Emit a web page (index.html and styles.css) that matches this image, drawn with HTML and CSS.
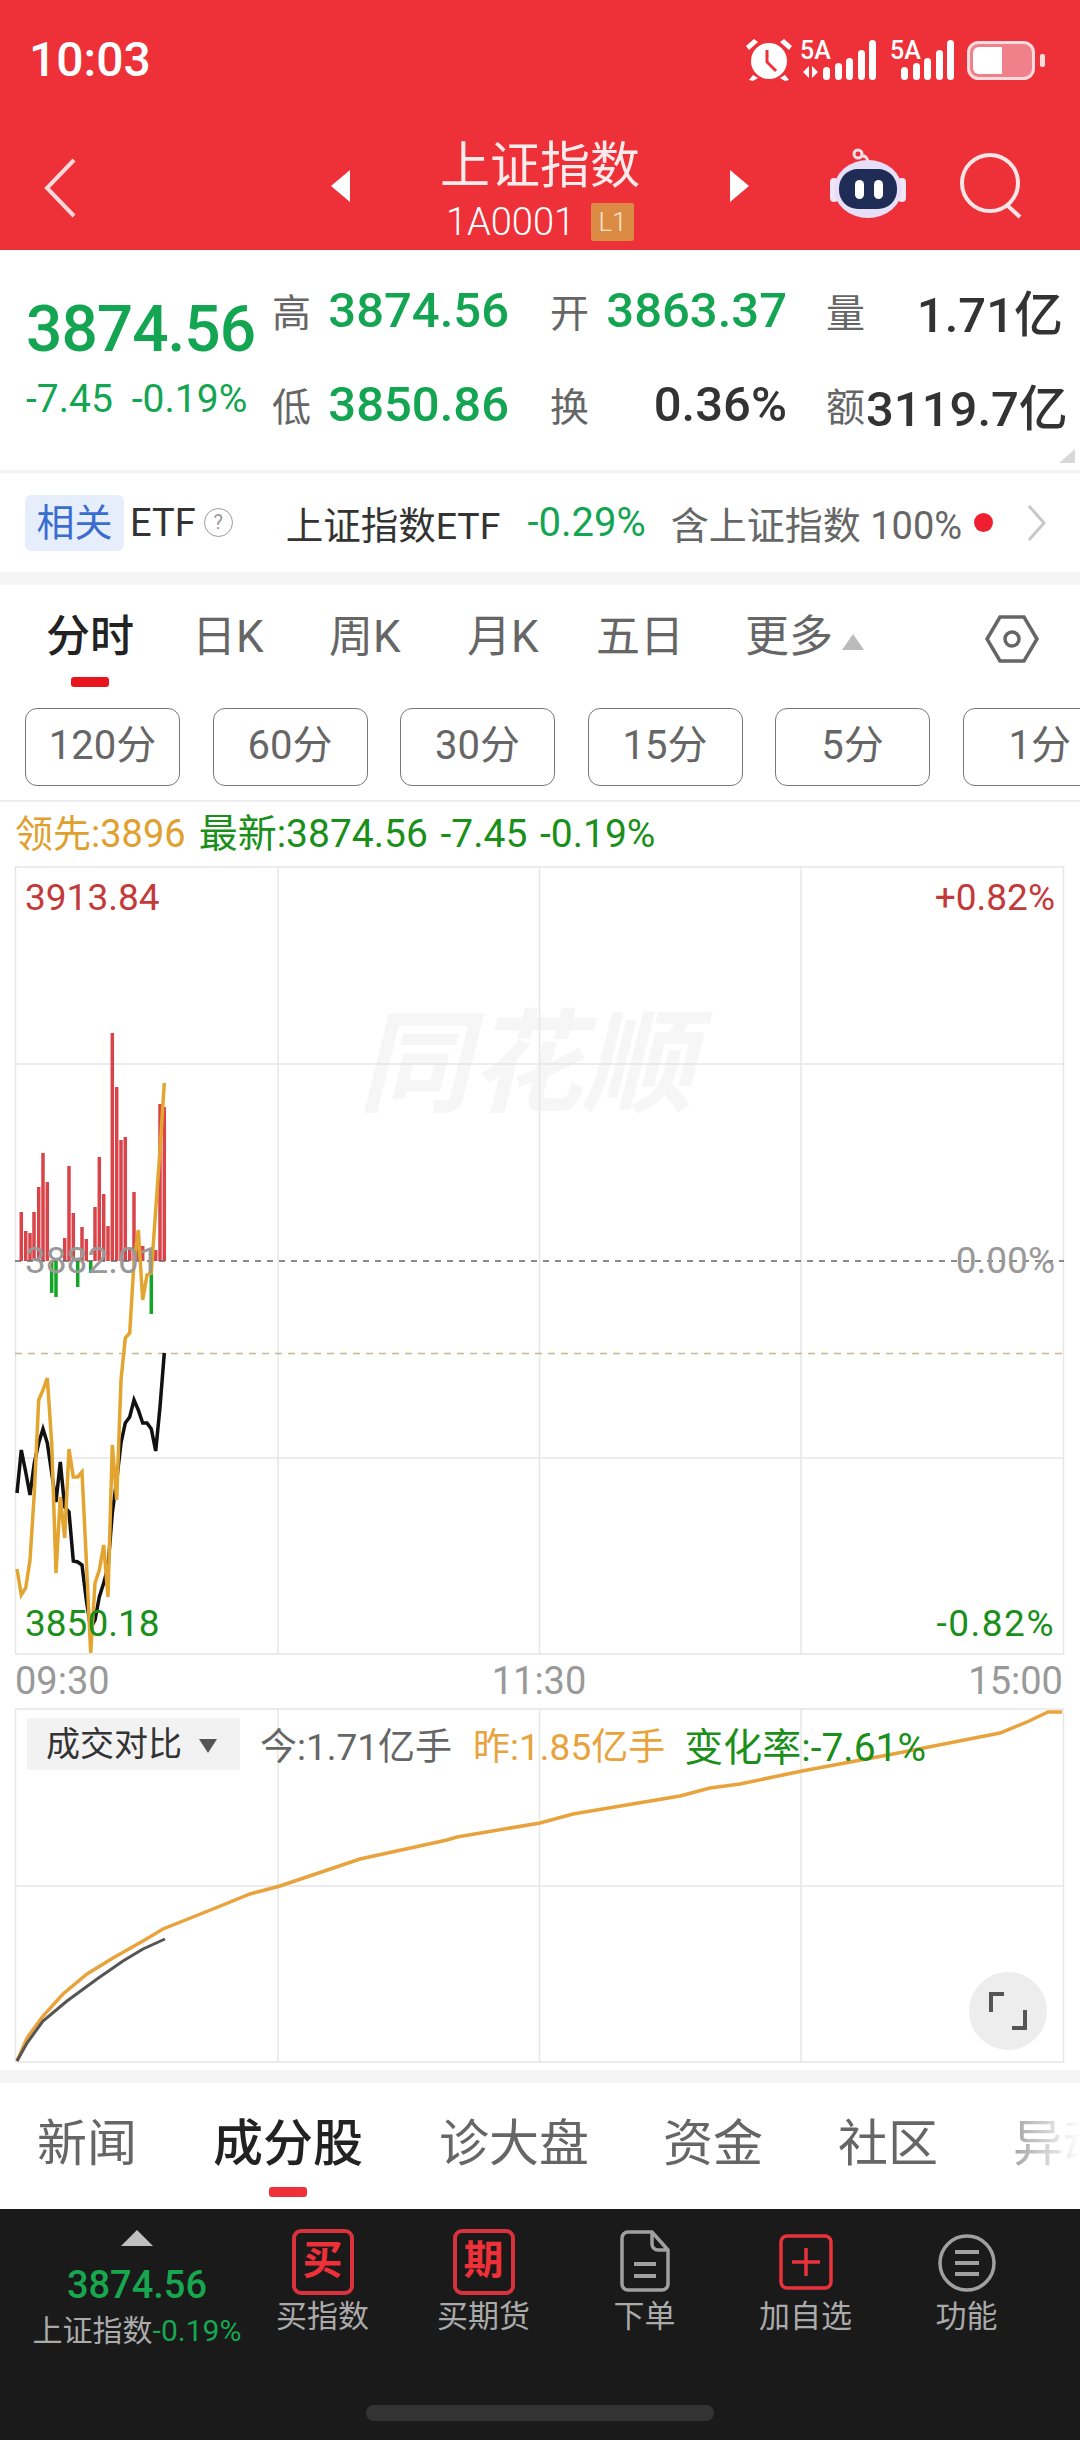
FILE: index.html
```html
<!DOCTYPE html>
<html lang="zh-CN">
<head>
    <meta charset="UTF-8">
    <meta name="viewport" content="width=device-width, initial-scale=1.0">
    <title>上证指数</title>
    <link rel="stylesheet" href="styles.css">
</head>
<body>
    <div class="page">
        <header class="header">
            <div class="status-bar">
                <span class="clock">10:03</span>
                <svg class="status-icons" width="270" height="52" viewBox="0 -8 270 52">
                    <!-- alarm -->
                    <g fill="#fff">
                        <circle cx="26" cy="23" r="18"/>
                        <path d="M6 12 L15 4 L11 1 L3 8Z M46 12 L37 4 L41 1 L49 8Z M10 37 L6 42 L10 43 L15 40Z M42 37 L46 42 L42 43 L37 40Z"/>
                    </g>
                    <path d="M24 12 V24 L33 33" fill="none" stroke="#ee3038" stroke-width="3"/>
                    <!-- sim 1 -->
                    <text class="sim-label" x="57" y="21">5A</text>
                    <path d="M66 28 L60 34 L66 40Z M69 28 L75 34 L69 40Z" fill="#fff"/>
                    <g fill="#fff">
                        <rect x="80" y="29" width="7" height="13" rx="3.5"/>
                        <rect x="92" y="25" width="7" height="17" rx="3.5"/>
                        <rect x="103" y="20" width="7" height="22" rx="3.5"/>
                        <rect x="115" y="12" width="7" height="30" rx="3.5"/>
                        <rect x="126" y="2" width="7" height="40" rx="3.5"/>
                    </g>
                    <!-- sim 2 -->
                    <text class="sim-label" x="147" y="21">5A</text>
                    <g fill="#fff">
                        <rect x="158" y="29" width="7" height="13" rx="3.5"/>
                        <rect x="170" y="25" width="7" height="17" rx="3.5"/>
                        <rect x="181" y="20" width="7" height="22" rx="3.5"/>
                        <rect x="193" y="12" width="7" height="30" rx="3.5"/>
                        <rect x="204" y="2" width="7" height="40" rx="3.5"/>
                    </g>
                </svg>
                <svg class="battery" width="80" height="40" viewBox="0 0 80 40">
                    <rect x="1.5" y="1.5" width="65" height="36" rx="10" fill="#f0808a" stroke="#fbdcde" stroke-width="3"/>
                    <path d="M12 6 H35 V33 H12 A6 6 0 0 1 6 27 V12 A6 6 0 0 1 12 6Z" fill="#fff"/>
                    <rect x="73" y="13" width="5" height="13" rx="2" fill="#fbdcde"/>
                </svg>
            </div>
            <nav class="nav-bar">
                <svg class="nav-back" width="34" height="60" viewBox="0 0 34 60">
                    <path d="M31 2 L4 30 L31 58" fill="none" stroke="#fbd9db" stroke-width="4"/>
                </svg>
                <div class="nav-center">
                    <span class="tri-left"></span>
                    <div class="nav-title">
                        <div class="stock-name">上证指数</div>
                        <div class="stock-code">1A0001<span class="level-tag">L1</span></div>
                    </div>
                    <span class="tri-right"></span>
                </div>
                <svg class="nav-robot" width="78" height="72" viewBox="0 0 78 72">
                    <circle cx="29" cy="6" r="4" fill="none" stroke="#f3dfe6" stroke-width="3"/>
                    <path d="M32 8 Q38 7 39 14" fill="none" stroke="#f3dfe6" stroke-width="3"/>
                    <rect x="1" y="30" width="8" height="24" rx="4" fill="#f1e6f6"/>
                    <rect x="69" y="30" width="8" height="24" rx="4" fill="#f1e6f6"/>
                    <ellipse cx="39" cy="41" rx="34" ry="29" fill="#e6dff7"/>
                    <rect x="10" y="21" width="58" height="40" rx="19" fill="#1f2c55"/>
                    <rect x="26" y="32" width="9" height="19" rx="4.5" fill="#fff"/>
                    <rect x="45" y="32" width="9" height="19" rx="4.5" fill="#fff"/>
                </svg>
                <svg class="nav-search" width="68" height="66" viewBox="0 0 68 66">
                    <circle cx="31" cy="30" r="28" fill="none" stroke="#fde4e6" stroke-width="4"/>
                    <path d="M49 53 L61 64" fill="none" stroke="#fde4e6" stroke-width="4"/>
                </svg>
            </nav>
        </header>

        <section class="quote">
            <div class="quote-main">
                <div class="last-price">3874.56</div>
                <div class="last-change"><span>-7.45</span><span>-0.19%</span></div>
            </div>
            <div class="quote-grid">
                <span class="q-label">高</span><span class="q-value up">3874.56</span>
                <span class="q-label">开</span><span class="q-value up">3863.37</span>
                <span class="q-label">量</span><span class="q-value">1.71亿</span>
                <span class="q-label">低</span><span class="q-value up">3850.86</span>
                <span class="q-label">换</span><span class="q-value">0.36%</span>
                <span class="q-label">额</span><span class="q-value">3119.7亿</span>
            </div>
            <span class="corner-mark"></span>
        </section>

        <section class="etf-row">
            <span class="etf-chip">相关</span>
            <span class="etf-title">ETF</span>
            <span class="help-dot">?</span>
            <span class="etf-name">上证指数ETF</span>
            <span class="etf-change">-0.29%</span>
            <span class="etf-hold">含上证指数 100%</span>
            <span class="red-dot"></span>
            <svg class="etf-arrow" width="20" height="36" viewBox="0 0 20 36">
                <path d="M2 1 L17 18 L2 35" fill="none" stroke="#c8c8c8" stroke-width="3"/>
            </svg>
        </section>

        <section class="chart-panel">
            <div class="period-tabs">
                <span class="period-tab active">分时</span>
                <span class="period-tab">日K</span>
                <span class="period-tab">周K</span>
                <span class="period-tab">月K</span>
                <span class="period-tab">五日</span>
                <span class="period-tab more">更多<i class="more-tri"></i></span>
                <svg class="hex-icon" width="54" height="48" viewBox="0 0 54 48">
                    <path d="M15 2 H39 L52 24 L39 46 H15 L2 24Z" fill="none" stroke="#666" stroke-width="3.5"/>
                    <circle cx="27" cy="24" r="7" fill="none" stroke="#666" stroke-width="3.5"/>
                </svg>
            </div>
            <div class="minute-tabs">
                <span class="minute-btn">120分</span>
                <span class="minute-btn">60分</span>
                <span class="minute-btn">30分</span>
                <span class="minute-btn">15分</span>
                <span class="minute-btn">5分</span>
                <span class="minute-btn last">1分</span>
            </div>
            <div class="chart-legend">
                <span class="lead">领先:3896</span>
                <span class="latest">最新:3874.56 -7.45 -0.19%</span>
            </div>

            <div class="price-chart">
                <div class="watermark">同花顺</div>
                <svg class="chart-svg" width="1080" height="790" viewBox="0 866 1080 790">
                    <g class="grid-line">
                        <path d="M15 867 H1064 M15 1064 H1064 M15 1458 H1064 M15 1654 H1064"/>
                        <path d="M15.5 867 V1654 M278 867 V1654 M539.5 867 V1654 M801 867 V1654 M1063.5 867 V1654"/>
                    </g>
                    <path class="bars-red" d="M21.3 1261V1212 M25.7 1261V1231 M30 1261V1233 M34 1261V1212 M38.7 1261V1187 M43 1261V1153 M47.3 1261V1182 M64.7 1261V1238 M69 1261V1166 M73.3 1261V1213 M82 1261V1227 M86.3 1261V1239 M95 1261V1207 M99.3 1261V1157 M103.7 1261V1194 M108 1261V1226 M112.3 1261V1033 M116.7 1261V1087 M121 1261V1140 M125.3 1261V1137 M129.7 1261V1250 M134 1261V1192 M138.3 1261V1233 M142.7 1261V1246 M155.7 1261V1250 M160 1261V1104 M164.3 1261V1107"/>
                    <path class="bars-green" d="M51.7 1261V1293 M56 1261V1297 M77.7 1261V1287 M90.7 1261V1273 M151.3 1261V1314"/>
                    <path class="dash-dark" d="M15 1261 H1064"/>
                    <path class="dash-tan" d="M15 1353.5 H1064"/>
                    <polyline class="line-black" points="17,1493 21.3,1450 25.7,1472 30,1495 34.3,1463 38.7,1443 43,1429 47.3,1443 51.7,1473 56,1502 60.3,1462 64.7,1507 69,1512 73.3,1561 77.7,1562 82,1565 86.3,1600 90.7,1628 95,1620 99.3,1597 103.7,1583 108,1567 112.3,1513 116.7,1480 121,1443 125.3,1423 129.7,1417 134,1400 138.3,1410 142.7,1423 147,1423 151.3,1429 155.7,1451 160,1407 164.3,1353"/>
                    <polyline class="line-gold" points="17,1569 21.3,1595 25.7,1588 30,1560 34.3,1493 38.7,1400 43,1390 47.3,1378 51.7,1443 56,1573 60.3,1497 64.7,1538 69,1449 73.3,1477 77.7,1477 82,1472 86.3,1560 90.7,1653 95,1583 99.3,1570 103.7,1545 108,1597 112.3,1445 116.7,1500 121,1380 125.3,1338 129.7,1333 134,1262 138.3,1230 142.7,1300 147,1275 151.3,1273 155.7,1210 160,1150 164.3,1083"/>
                </svg>
                <span class="axis-label axis-tl">3913.84</span>
                <span class="axis-label axis-tr">+0.82%</span>
                <span class="axis-label axis-ml">3882.01</span>
                <span class="axis-label axis-mr">0.00%</span>
                <span class="axis-label axis-bl">3850.18</span>
                <span class="axis-label axis-br">-0.82%</span>
            </div>
            <div class="time-axis"><span>09:30</span><span>11:30</span><span>15:00</span></div>

            <div class="volume-chart">
                <svg class="chart-svg" width="1080" height="356" viewBox="0 1707 1080 356">
                    <g class="grid-line">
                        <path d="M15 1708 H1064 M15 1885 H1064 M15 2061 H1064"/>
                        <path d="M15.5 1708 V2061 M278 1708 V2061 M539.5 1708 V2061 M801 1708 V2061 M1063.5 1708 V2061"/>
                    </g>
                    <polyline class="line-yest" points="17,2060 27,2037 43,2015 63,1993 87,1973 113,1957 143,1940 163,1928 213,1908 250,1893 280,1885 360,1858 447,1839 457,1836 540,1822 573,1813 680,1795 710,1787 740,1783 802,1770 893,1753 1000,1732 1027,1721 1048,1711 1062,1711"/>
                    <polyline class="line-today" points="17,2060 27,2042 43,2020 67,2000 97,1978 123,1960 143,1948 165,1938"/>
                </svg>
                <div class="volume-legend">
                    <span class="volume-select">成交对比<i class="select-tri"></i></span>
                    <span class="vol-today">今:1.71亿手</span>
                    <span class="vol-yest">昨:1.85亿手</span>
                    <span class="vol-rate">变化率:-7.61%</span>
                </div>
                <div class="expand-btn">
                    <svg width="40" height="40" viewBox="0 0 40 40">
                        <path d="M16 3 H3 V21 M24 37 H37 V19" fill="none" stroke="#555" stroke-width="4"/>
                    </svg>
                </div>
            </div>
        </section>

        <section class="info-tabs">
            <span class="info-tab">新闻</span>
            <span class="info-tab active">成分股</span>
            <span class="info-tab">诊大盘</span>
            <span class="info-tab">资金</span>
            <span class="info-tab">社区</span>
            <span class="info-tab">异动</span>
        </section>

        <footer class="bottom-bar">
            <div class="bottom-actions">
                <div class="mini-quote">
                    <i class="mini-tri"></i>
                    <div class="mini-price">3874.56</div>
                    <div class="mini-name">上证指数<span>-0.19%</span></div>
                </div>
                <div class="action">
                    <span class="square-icon">买</span>
                    <span class="action-label">买指数</span>
                </div>
                <div class="action">
                    <span class="square-icon">期</span>
                    <span class="action-label">买期货</span>
                </div>
                <div class="action">
                    <svg class="action-svg" width="50" height="62" viewBox="0 0 50 62">
                        <path d="M8 2 H32 L48 20 V54 A6 6 0 0 1 42 60 H8 A6 6 0 0 1 2 54 V8 A6 6 0 0 1 8 2Z M32 2 V14 A6 6 0 0 0 38 20 H48" fill="none" stroke="#a0a0a0" stroke-width="3.5"/>
                        <path d="M14 34 H36 M14 46 H36" stroke="#a0a0a0" stroke-width="4"/>
                    </svg>
                    <span class="action-label">下单</span>
                </div>
                <div class="action">
                    <svg class="action-svg plus-icon" width="54" height="56" viewBox="0 0 54 56">
                        <rect x="2" y="2" width="50" height="52" rx="6" fill="none" stroke="#e8323c" stroke-width="3.5"/>
                        <path d="M27 14 V42 M13 28 H41" stroke="#e8323c" stroke-width="3.5"/>
                    </svg>
                    <span class="action-label">加自选</span>
                </div>
                <div class="action">
                    <svg class="action-svg" width="58" height="58" viewBox="0 0 58 58">
                        <circle cx="29" cy="29" r="27" fill="none" stroke="#a0a0a0" stroke-width="3.5"/>
                        <path d="M17 18 H41 M17 29 H41 M17 40 H41" stroke="#a0a0a0" stroke-width="4"/>
                    </svg>
                    <span class="action-label">功能</span>
                </div>
            </div>
            <div class="home-bar"></div>
        </footer>
    </div>
</body>
</html>
```

FILE: styles.css
```css
* {
    box-sizing: border-box;
}
body {
    margin: 0;
    background: white;
    font-family: Roboto, "Noto Sans CJK SC", sans-serif;
    color: #333;
}
.page {
    width: 1080px;
    height: 2440px;
    overflow: hidden;
    display: flex;
    flex-direction: column;
}

/* red header */
.header {
    height: 250px;
    background: #ee3038;
    color: white;
    flex: none;
}
.status-bar {
    height: 120px;
    display: flex;
    align-items: flex-start;
    padding: 36px 33px 0 29px;
}
.clock {
    font-size: 48px;
    font-weight: 500;
    line-height: 48px;
}
.status-icons {
    margin-left: auto;
    margin-top: -6px;
}
.sim-label {
    font-size: 25px;
    font-weight: 500;
    fill: white;
}
.battery {
    margin-left: -46px;
    margin-top: 5px;
}
.nav-bar {
    height: 130px;
    display: flex;
    align-items: flex-start;
}
.nav-back {
    margin: 38px 0 0 43px;
}
.nav-center {
    width: 418px;
    margin-left: 254px;
    display: flex;
    justify-content: space-between;
    align-items: flex-start;
}
.tri-left, .tri-right {
    margin-top: 50px;
    border-top: 16px solid transparent;
    border-bottom: 16px solid transparent;
}
.tri-left {
    border-right: 19px solid white;
}
.tri-right {
    border-left: 19px solid white;
}
.nav-title {
    text-align: center;
}
.stock-name {
    font-size: 50px;
    line-height: 60px;
    margin-top: 16px;
    color: #fdeaea;
}
.stock-code {
    font-size: 38px;
    font-weight: 300;
    line-height: 44px;
    margin-top: 4px;
    display: flex;
    align-items: center;
    justify-content: center;
}
.level-tag {
    width: 43px;
    height: 38px;
    line-height: 38px;
    margin-left: 16px;
    background: #dc8b45;
    color: #fbe6cf;
    font-size: 26px;
    border-radius: 2px;
}
.nav-robot {
    margin: 28px 0 0 80px;
}
.nav-search {
    margin: 33px 0 0 52px;
}

/* quote block */
.quote {
    height: 220px;
    position: relative;
    display: flex;
    flex: none;
}
.quote-main {
    width: 272px;
    padding: 44px 0 0 26px;
}
.last-price {
    font-size: 64px;
    font-weight: 500;
    line-height: 72px;
    letter-spacing: -1px;
    color: #14a553;
}
.last-change {
    margin-top: 13px;
    display: flex;
    gap: 19px;
    font-size: 39px;
    line-height: 40px;
    color: #14a553;
}
.quote-grid {
    width: 791px;
    margin-top: 30px;
    display: grid;
    grid-template-columns: 56px 181px 97px 181px 79px 197px;
    grid-template-rows: 60px 60px;
    row-gap: 34px;
    height: 154px;
    align-items: center;
}
.q-label {
    font-size: 39px;
    color: #666;
}
.q-label:nth-child(3), .q-label:nth-child(9) {
    padding-left: 41px;
}
.q-label:nth-child(5), .q-label:nth-child(11) {
    padding-left: 39px;
}
.q-value {
    font-size: 49px;
    font-weight: 500;
    color: #333;
    text-align: right;
    white-space: nowrap;
}
.q-value.up {
    color: #14a553;
}
.corner-mark {
    position: absolute;
    right: 5px;
    bottom: 7px;
    border-left: 16px solid transparent;
    border-bottom: 14px solid #d8d8d8;
}

/* related ETF row */
.etf-row {
    height: 115px;
    flex: none;
    border-top: 3px solid #f2f2f2;
    border-bottom: 13px solid #f5f5f5;
    padding: 0 0 0 25px;
    display: flex;
    align-items: center;
    font-size: 37.5px;
    color: #333;
    white-space: nowrap;
}
.etf-chip {
    width: 99px;
    height: 56px;
    line-height: 56px;
    text-align: center;
    background: #e6eefb;
    color: #3b6ccf;
    font-size: 38px;
    border-radius: 6px;
}
.etf-title {
    margin-left: 6px;
    font-size: 38px;
}
.help-dot {
    width: 29px;
    height: 29px;
    line-height: 27px;
    margin-left: 8px;
    border: 1px solid #999;
    border-radius: 50%;
    color: #999;
    font-size: 20px;
    text-align: center;
}
.etf-name {
    margin-left: 53px;
}
.etf-change {
    margin-left: 27px;
    font-size: 40px;
    color: #14a553;
}
.etf-hold {
    margin-left: 25px;
    font-size: 38px;
    color: #666;
}
.red-dot {
    width: 19px;
    height: 19px;
    margin-left: 12px;
    border-radius: 50%;
    background: #ee2030;
}
.etf-arrow {
    margin-left: 34px;
}

/* minute chart panel */
.chart-panel {
    height: 1485px;
    flex: none;
}
.period-tabs {
    height: 123px;
    position: relative;
    font-size: 44px;
    color: #666;
}
.period-tab {
    position: absolute;
    top: 24px;
    line-height: 56px;
    white-space: nowrap;
}
.period-tab:nth-child(1) { left: 46px; }
.period-tab:nth-child(2) { left: 192px; }
.period-tab:nth-child(3) { left: 329px; }
.period-tab:nth-child(4) { left: 467px; }
.period-tab:nth-child(5) { left: 596px; }
.period-tab:nth-child(6) { left: 745px; }
.period-tab.active {
    color: #222;
    font-weight: 500;
}
.period-tab.active::after {
    content: "";
    position: absolute;
    left: 25px;
    top: 68px;
    width: 38px;
    height: 10px;
    border-radius: 3px;
    background: #e8141c;
}
.more-tri {
    display: inline-block;
    margin: 0 0 2px 9px;
    border-left: 11px solid transparent;
    border-right: 11px solid transparent;
    border-bottom: 16px solid #bbb;
}
.hex-icon {
    position: absolute;
    left: 985px;
    top: 30px;
}
.minute-tabs {
    height: 94px;
    display: flex;
    align-items: flex-start;
    gap: 32.5px;
    padding-left: 25px;
    border-bottom: 2px solid #eee;
}
.minute-btn {
    width: 155px;
    height: 78px;
    line-height: 74px;
    flex: none;
    border: 1px solid #777;
    border-radius: 12px;
    text-align: center;
    font-size: 40px;
    color: #666;
}
.minute-btn.last {
    text-align: left;
    padding-left: 45px;
}
.chart-legend {
    height: 64px;
    padding: 8px 0 0 15px;
    font-size: 38px;
    line-height: 48px;
    display: flex;
    gap: 13px;
    white-space: nowrap;
}
.lead {
    color: #e0a030;
}
.latest {
    font-size: 39px;
    word-spacing: 3px;
    color: #1a8f1a;
}
.price-chart {
    height: 790px;
    position: relative;
}
.chart-svg {
    display: block;
}
.price-chart .chart-svg {
    position: absolute;
    left: 0;
    top: 0;
}
.grid-line path {
    fill: none;
    stroke: #e6e6e6;
    stroke-width: 1.5;
}
.bars-red {
    fill: none;
    stroke: #d8444a;
    stroke-width: 3.5;
}
.bars-green {
    fill: none;
    stroke: #12a526;
    stroke-width: 3.5;
}
.dash-dark {
    fill: none;
    stroke: #666;
    stroke-width: 1.5;
    stroke-dasharray: 6 6;
}
.dash-tan {
    fill: none;
    stroke: #c8b890;
    stroke-width: 1.5;
    stroke-dasharray: 7 6;
}
.line-black {
    fill: none;
    stroke: #111;
    stroke-width: 3.5;
}
.line-gold {
    fill: none;
    stroke: #e3a52f;
    stroke-width: 3.5;
}
.watermark {
    position: absolute;
    left: 358px;
    top: 134px;
    font-size: 112px;
    line-height: 130px;
    font-weight: 700;
    font-style: italic;
    color: #f6f6f6;
}
.axis-label {
    position: absolute;
    font-size: 37px;
    line-height: 44px;
}
.axis-tl { left: 25px; top: 10px; color: #c23a3a; }
.axis-tr { right: 25px; top: 10px; color: #c23a3a; }
.axis-ml { left: 25px; top: 373px; color: #999; }
.axis-mr { right: 25px; top: 373px; color: #999; }
.axis-bl { left: 25px; top: 736px; color: #1a8f1a; }
.axis-br { right: 25px; top: 736px; color: #1a8f1a; letter-spacing: 1.5px; }
.time-axis {
    height: 52px;
    padding: 3px 17px 0 15px;
    display: flex;
    justify-content: space-between;
    font-size: 38px;
    line-height: 44px;
    color: #999;
}
.volume-chart {
    height: 356px;
    position: relative;
}
.line-yest {
    fill: none;
    stroke: #e8a33d;
    stroke-width: 3.5;
}
.line-today {
    fill: none;
    stroke: #555;
    stroke-width: 3;
}
.volume-legend {
    position: absolute;
    left: 27px;
    top: 10px;
    height: 52px;
    display: flex;
    align-items: center;
    font-size: 37px;
    white-space: nowrap;
}
.volume-select {
    width: 213px;
    height: 52px;
    line-height: 52px;
    padding-left: 19px;
    background: #f2f2f2;
    font-size: 34px;
    color: #333;
}
.select-tri {
    display: inline-block;
    margin: 0 0 3px 17px;
    border-left: 9px solid transparent;
    border-right: 9px solid transparent;
    border-top: 14px solid #555;
}
.vol-today {
    margin-left: 20px;
    color: #666;
}
.vol-yest {
    margin-left: 21px;
    color: #e8a33d;
}
.vol-rate {
    margin-left: 19px;
    font-size: 39px;
    color: #1a8f1a;
}
.expand-btn {
    position: absolute;
    left: 969px;
    top: 264px;
    width: 78px;
    height: 78px;
    border-radius: 50%;
    background: #ededed;
    display: flex;
    align-items: center;
    justify-content: center;
}

/* lower tabs */
.info-tabs {
    height: 139px;
    flex: none;
    border-top: 13px solid #f5f5f5;
    position: relative;
    font-size: 50px;
    color: #666;
    white-space: nowrap;
    overflow: hidden;
}
.info-tabs::after {
    content: "";
    position: absolute;
    right: 0;
    top: 0;
    width: 80px;
    height: 100%;
    background: linear-gradient(to right, rgba(255,255,255,0.3), white);
}
.info-tab {
    position: absolute;
    top: 28px;
    line-height: 66px;
}
.info-tab:nth-child(1) { left: 37px; }
.info-tab:nth-child(2) { left: 213px; }
.info-tab:nth-child(3) { left: 439px; }
.info-tab:nth-child(4) { left: 663px; }
.info-tab:nth-child(5) { left: 838px; }
.info-tab:nth-child(6) { left: 1013px; }
.info-tab.active {
    color: #222;
    font-weight: 500;
}
.info-tab.active::after {
    content: "";
    position: absolute;
    left: 56px;
    top: 76px;
    width: 38px;
    height: 10px;
    border-radius: 3px;
    background: #ee3038;
}

/* dark bottom bar */
.bottom-bar {
    flex: 1;
    background: #1a1a1a;
    display: flex;
    flex-direction: column;
}
.bottom-actions {
    height: 196px;
    display: flex;
}
.mini-quote {
    width: 274px;
    margin-right: -32px;
    padding-top: 21px;
    display: flex;
    flex-direction: column;
    align-items: center;
}
.mini-tri {
    border-left: 16px solid transparent;
    border-right: 16px solid transparent;
    border-bottom: 16px solid #c0c0c0;
}
.mini-price {
    margin-top: 16px;
    font-size: 38px;
    font-weight: 500;
    line-height: 46px;
    color: #17a84f;
}
.mini-name {
    margin-top: 5px;
    font-size: 30px;
    line-height: 36px;
    color: #aaa;
    white-space: nowrap;
}
.mini-name span {
    color: #17a84f;
}
.action {
    width: 161px;
    height: 128px;
    display: flex;
    flex-direction: column;
    align-items: center;
    justify-content: flex-end;
}
.square-icon {
    width: 62px;
    height: 66px;
    line-height: 56px;
    border: 4px solid #d9323c;
    border-radius: 9px;
    margin-bottom: 2px;
    text-align: center;
    color: #ee3038;
    font-size: 40px;
    font-weight: 700;
}
.action-svg {
    margin-bottom: 5px;
}
.plus-icon {
    margin-bottom: 7px;
}
.action-label {
    font-size: 31px;
    line-height: 40px;
    color: #aaa;
}
.home-bar {
    width: 348px;
    height: 16px;
    margin: 0 auto;
    border-radius: 8px;
    background: #333;
}
```
